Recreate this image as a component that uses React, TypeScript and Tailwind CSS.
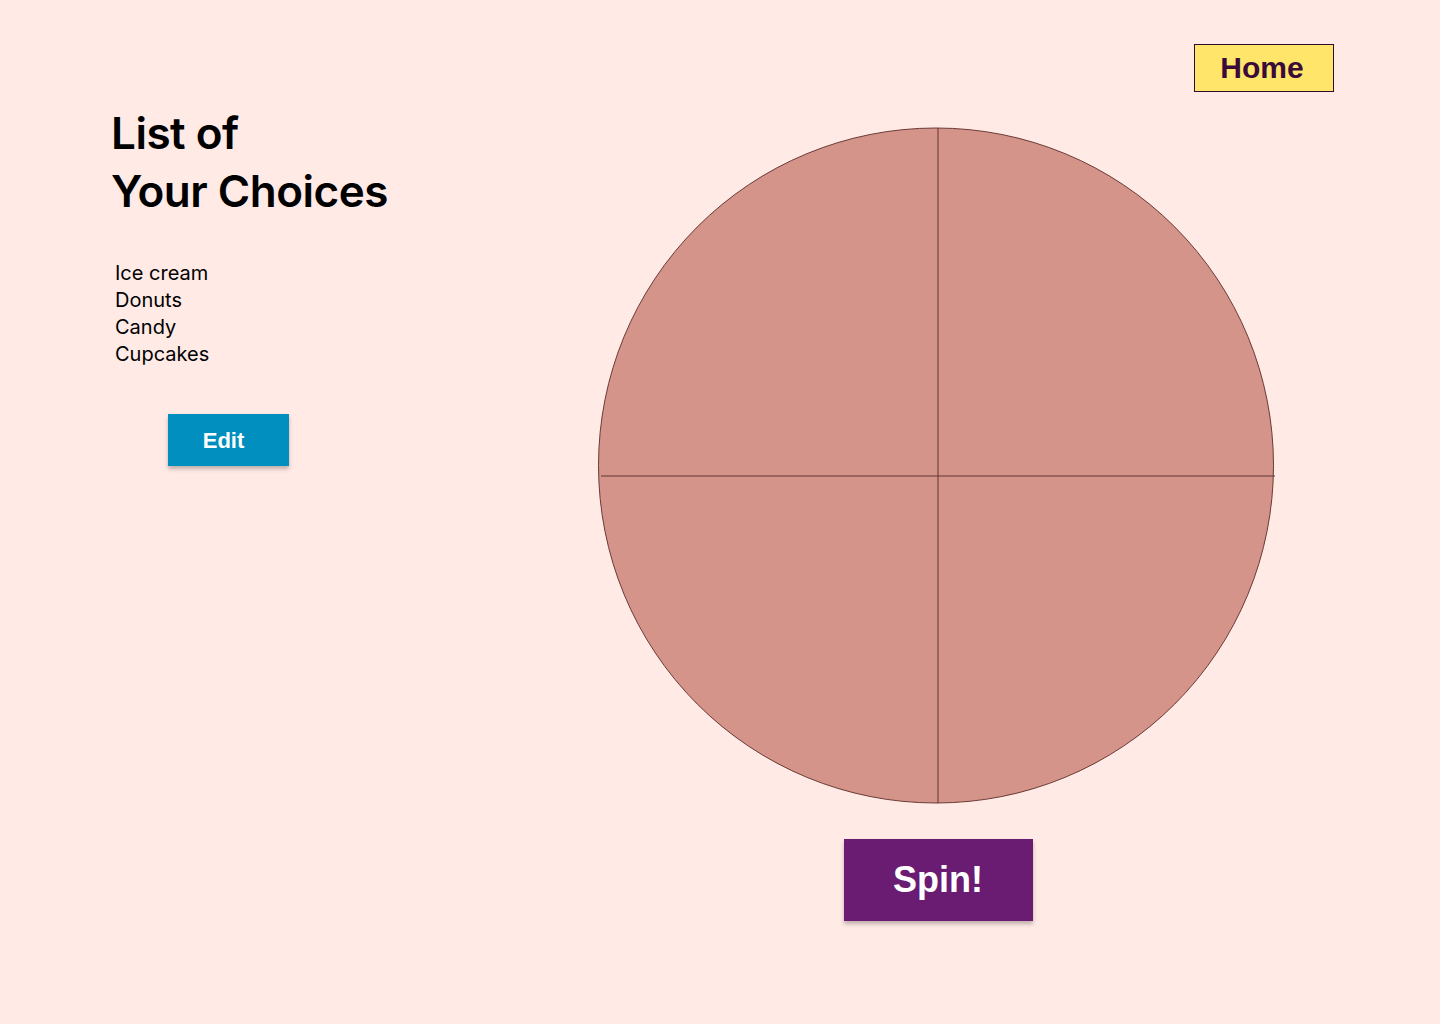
export default function App() {
  const choices = ['Ice cream', 'Donuts', 'Candy', 'Cupcakes']

  return (
    <div className="w-[1440px] h-[1024px] bg-[#FFEAE6] flex font-['Inter',sans-serif] text-black">
      {/* Left column: list of choices */}
      <div className="w-[598px] pl-[111px] pt-[104px] flex flex-col">
        <h1 className="text-[44px] leading-[58px] font-semibold tracking-[-0.5px]">
          List of
          <br />
          Your Choices
        </h1>
        <ul className="mt-[40px] pl-[4px] text-[20px] leading-[27px]">
          {choices.map((c) => (
            <li key={c}>{c}</li>
          ))}
        </ul>
        <button className="mt-[46px] ml-[57px] w-[121px] h-[52px] bg-[#008FBE] text-white text-[22px] font-bold font-['Liberation_Sans',sans-serif] shadow-[0_3px_4px_rgba(0,0,0,0.25)] pr-[10px]">
          Edit
        </button>
      </div>

      {/* Right column: home + wheel */}
      <div className="w-[736px] flex flex-col">
        <div className="flex justify-end pt-[44px]">
          <button className="w-[140px] h-[48px] bg-[#FFE66B] border border-[#2d0a2e] text-[#3a0a38] text-[30px] font-bold font-['Liberation_Sans',sans-serif] leading-none pl-[2px] pr-[6px]">
            Home
          </button>
        </div>
        <div className="w-[678px] mt-[36px] flex flex-col items-center">
          <svg width="678" height="677" viewBox="0 0 678 677" className="overflow-visible">
            <circle cx="338" cy="337.5" r="337.5" fill="#D4948A" stroke="#6b3a35" strokeWidth="1" />
            <line x1="340" y1="0" x2="340" y2="675" stroke="#5e3430" strokeWidth="1" />
            <line x1="3" y1="348" x2="677" y2="348" stroke="#5e3430" strokeWidth="1" />
          </svg>
          <button className="mt-[34px] ml-[2px] w-[189px] h-[82px] bg-[#6A1B72] text-white text-[36px] font-bold font-['Liberation_Sans',sans-serif] shadow-[0_3px_4px_rgba(0,0,0,0.25)]">
            Spin!
          </button>
        </div>
      </div>
    </div>
  )
}
